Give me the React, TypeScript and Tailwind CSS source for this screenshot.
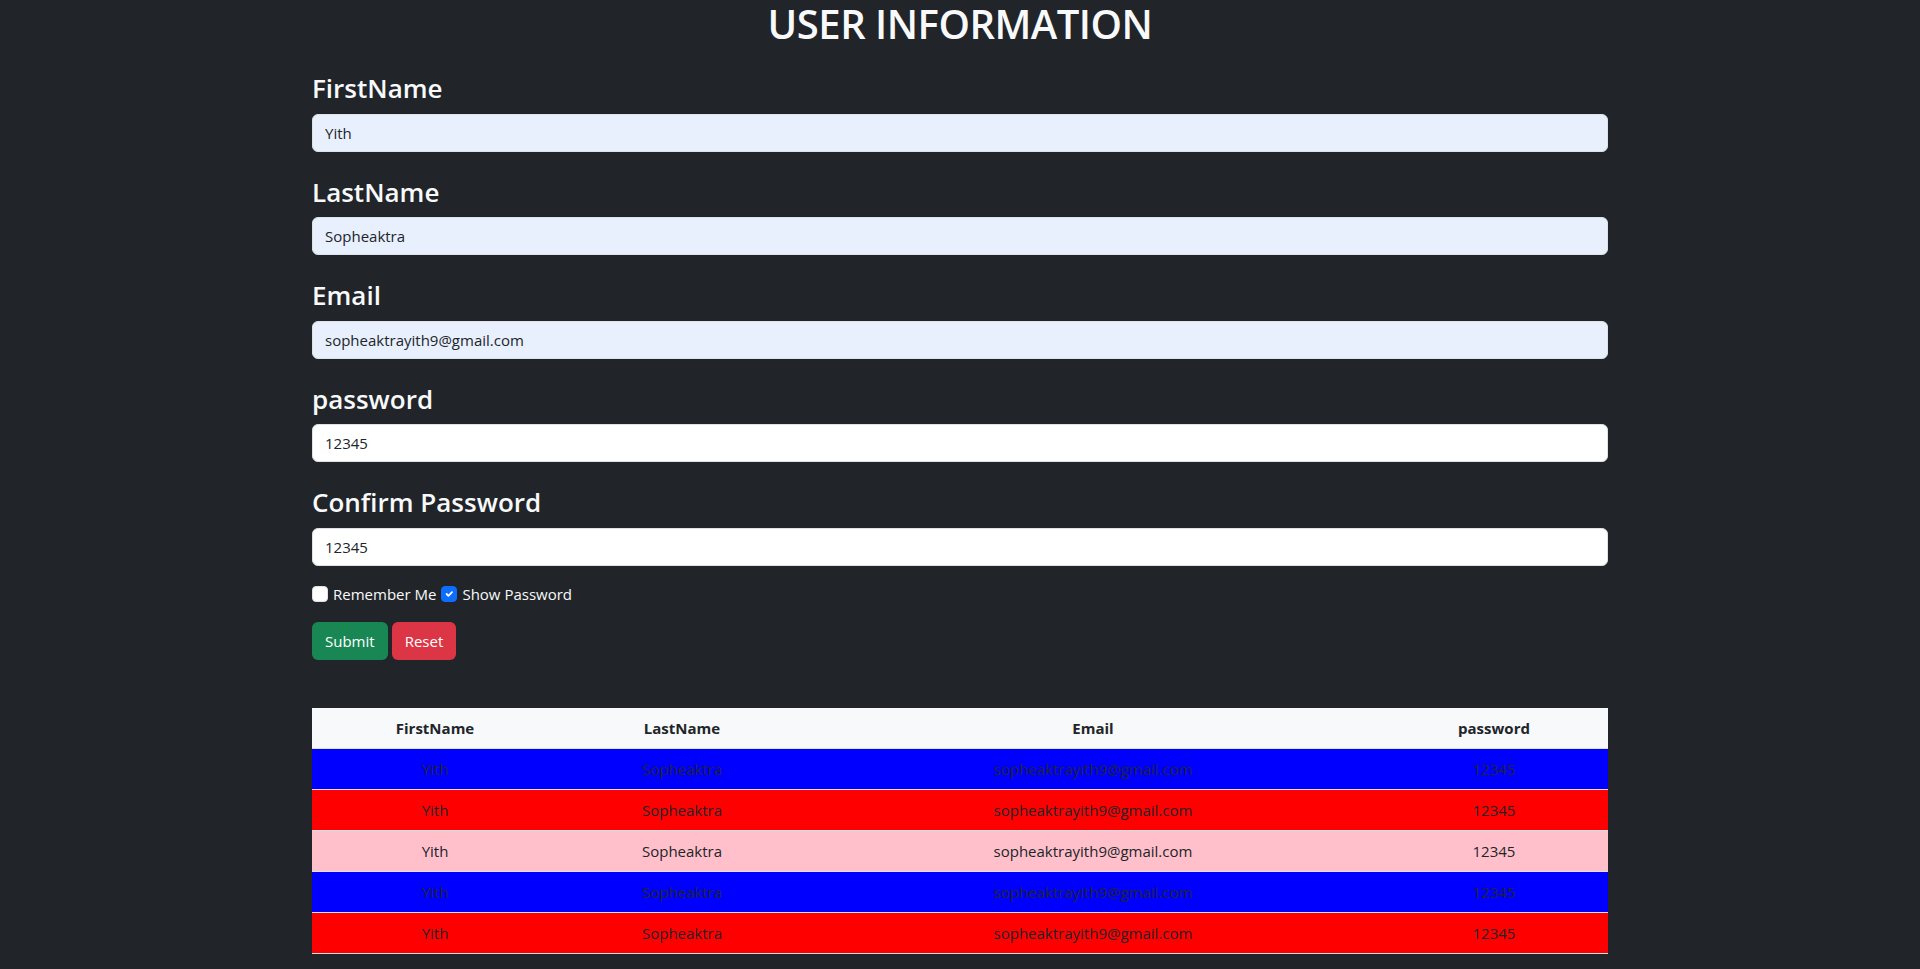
import { useState } from "react";

/* ── Data ── */

type User = {
  firstName: string;
  lastName: string;
  email: string;
  password: string;
};

const user: User = {
  firstName: "Yith",
  lastName: "Sopheaktra",
  email: "sopheaktrayith9@gmail.com",
  password: "12345",
};

const rowColors = ["bg-[#0000ff]", "bg-[#ff0000]", "bg-[#ffc0cb]", "bg-[#0000ff]", "bg-[#ff0000]"];

const fields = [
  { label: "FirstName", value: user.firstName, autofill: true },
  { label: "LastName", value: user.lastName, autofill: true },
  { label: "Email", value: user.email, autofill: true },
  { label: "password", value: user.password, autofill: false },
  { label: "Confirm Password", value: user.password, autofill: false },
];

/* ── Checkbox ── */

function Check({ checked, label }: { checked: boolean; label: string }) {
  return (
    <label className="inline-flex items-center gap-[5px]">
      <span
        className={
          checked
            ? "w-4 h-4 rounded-[4px] bg-[#0d6efd] border border-[#0d6efd] flex items-center justify-center"
            : "w-4 h-4 rounded-[4px] bg-white border border-[#dee2e6]"
        }
      >
        {checked && (
          <svg width="12" height="12" viewBox="0 0 20 20" fill="none">
            <path d="M6 10l3 3 6-6" stroke="#fff" strokeWidth="3" strokeLinecap="round" strokeLinejoin="round" />
          </svg>
        )}
      </span>
      <span>{label}</span>
    </label>
  );
}

/* ── App ── */

export default function App() {
  const [values, setValues] = useState(fields.map((f) => f.value));

  return (
    <div className="min-h-screen bg-[#212529] text-[#f8f9fa] font-['Open_Sans',sans-serif]">
      <div className="w-[1296px] mx-auto pb-4">
        <h1 className="text-center text-[40px] leading-[48px] font-semibold tracking-[-0.5px]">
          USER INFORMATION
        </h1>

        <div className="flex flex-col gap-6 mt-6">
          {fields.map((f, i) => (
            <div key={f.label} className="flex flex-col">
              <label className="text-[26px] leading-[33.6px] font-semibold mb-2">{f.label}</label>
              <input
                value={values[i]}
                onChange={(e) => {
                  const next = [...values];
                  next[i] = e.target.value;
                  setValues(next);
                }}
                className={
                  (f.autofill ? "bg-[#e8f0fe] " : "bg-white ") +
                  "h-[38px] w-full rounded-[6px] border border-[#dee2e6] px-3 text-[15px] text-[#212529] outline-none"
                }
              />
            </div>
          ))}
        </div>

        <div className="flex items-center gap-[5px] mt-4 h-6 text-[15px]">
          <Check checked={false} label="Remember Me" />
          <Check checked={true} label="Show Password" />
        </div>

        <div className="flex gap-1 mt-4">
          <button className="h-[38px] px-[13px] rounded-[6px] bg-[#198754] text-white text-[15px]">Submit</button>
          <button className="h-[38px] px-[13px] rounded-[6px] bg-[#dc3545] text-white text-[15px]">Reset</button>
        </div>

        <table className="w-full mt-12 text-center text-[#212529] text-[15px] border-collapse table-fixed">
          <thead>
            <tr className="bg-[#f8f9fa]">
              <th className="w-[246px] py-2 px-2 font-bold leading-6">FirstName</th>
              <th className="w-[248px] py-2 px-2 font-bold leading-6">LastName</th>
              <th className="w-[574px] py-2 px-2 font-bold leading-6">Email</th>
              <th className="w-[228px] py-2 px-2 font-bold leading-6">password</th>
            </tr>
          </thead>
          <tbody>
            {rowColors.map((c, i) => (
              <tr key={i} className={c + " border-t border-[#dee2e6]"}>
                <td className="py-2 px-2 leading-6">{user.firstName}</td>
                <td className="py-2 px-2 leading-6">{user.lastName}</td>
                <td className="py-2 px-2 leading-6">{user.email}</td>
                <td className="py-2 px-2 leading-6">{user.password}</td>
              </tr>
            ))}
            <tr className="border-t border-[#dee2e6]" />
          </tbody>
        </table>
      </div>
    </div>
  );
}
